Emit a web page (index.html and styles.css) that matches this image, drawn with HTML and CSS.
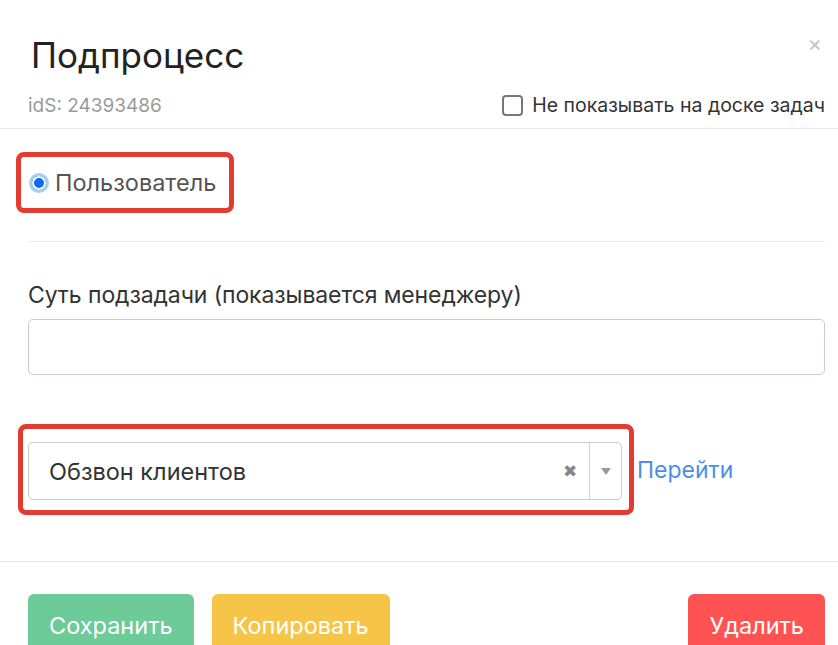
FILE: index.html
```
<!DOCTYPE html>
<html lang="ru">
<head>
    <meta charset="UTF-8">
    <meta name="viewport" content="width=device-width, initial-scale=1.0">
    <title>Подпроцесс</title>
    <link rel="stylesheet" href="styles.css">
</head>
<body>
    <div class="modal">
        <div class="modal-header">
            <div class="title-row">
                <h1>Подпроцесс</h1>
                <span class="close">&times;</span>
            </div>
            <div class="meta-row">
                <span class="ids">idS: 24393486</span>
                <label class="hide-check"><span class="checkbox"></span>Не показывать на доске задач</label>
            </div>
        </div>
        <div class="modal-body">
            <div class="mark mark-radio">
                <span class="radio"></span>
                <span class="radio-label">Пользователь</span>
            </div>
            <div class="divider"></div>
            <label class="field-label">Суть подзадачи (показывается менеджеру)</label>
            <div class="text-input"></div>
            <div class="select-row">
                <div class="mark mark-select">
                    <div class="select">
                        <span class="select-value">Обзвон клиентов</span>
                        <span class="select-clear">&#10006;</span>
                        <span class="select-arrow"><span class="caret"></span></span>
                    </div>
                </div>
                <a class="go-link" href="#">Перейти</a>
            </div>
        </div>
        <div class="modal-footer">
            <button class="btn btn-save">Сохранить</button>
            <button class="btn btn-copy">Копировать</button>
            <button class="btn btn-delete">Удалить</button>
        </div>
    </div>
</body>
</html>
```

FILE: styles.css
```
body {
    margin: 0;
    font-family: Inter, "Noto Sans", sans-serif;
    background: #fff;
    color: #333;
    overflow: hidden;
}
.modal-header {
    padding: 33px 13px 11px 28px;
    border-bottom: 1px solid #e6e6e6;
}
.title-row {
    display: flex;
    justify-content: space-between;
    align-items: flex-start;
}
h1 {
    margin: 0 0 16px 3px;
    font-size: 35px;
    line-height: 44px;
    font-weight: 400;
    color: #222;
}
.close {
    font-size: 22px;
    line-height: 20px;
    color: #c4c4c4;
    margin-right: 3px;
}
.meta-row {
    display: flex;
    justify-content: space-between;
    align-items: center;
    height: 24px;
}
.ids {
    font-size: 19px;
    color: #9a9a9a;
}
.hide-check {
    display: flex;
    align-items: center;
    font-size: 19.5px;
    color: #333;
}
.checkbox {
    width: 17px;
    height: 17px;
    border: 2px solid #777;
    border-radius: 4px;
    margin-right: 9px;
}
.modal-body {
    padding: 23px 13px 46px 28px;
}
.mark {
    border: 5px solid #e23b31;
    border-radius: 8px;
}
.mark-radio {
    display: inline-flex;
    align-items: center;
    margin-left: -12px;
    padding: 13px 13px 13px 8px;
    height: 25px;
}
.radio {
    width: 14px;
    height: 14px;
    border-radius: 50%;
    border: 3px solid #a9cdfb;
    background: #0b6cf2;
    box-shadow: inset 0 0 0 2px #fff;
    margin-right: 6px;
}
.radio-label {
    font-size: 23.5px;
    color: #555;
}
.divider {
    height: 1px;
    background: #ebebeb;
    margin: 28px 0 40px;
}
.field-label {
    display: block;
    font-size: 23px;
    line-height: 26px;
    color: #333;
    letter-spacing: -0.1px;
}
.text-input {
    margin-top: 11px;
    height: 54px;
    border: 1px solid #c9c9d1;
    border-radius: 5px;
}
.select-row {
    display: flex;
    align-items: center;
    margin-top: 49px;
}
.mark-select {
    margin-left: -10px;
    padding: 13px 7px 10px 5px;
}
.select {
    display: flex;
    align-items: center;
    width: 592px;
    height: 56px;
    border: 1px solid #c9c9d1;
    border-radius: 5px;
}
.select-value {
    flex: 1;
    padding-left: 20px;
    font-size: 23.5px;
    color: #333;
}
.select-clear {
    font-size: 17px;
    color: #888;
    margin-right: 12px;
}
.select-arrow {
    display: flex;
    align-items: center;
    justify-content: center;
    width: 31px;
    height: 100%;
    border-left: 1px solid #d0d0d0;
}
.caret {
    border-left: 5px solid transparent;
    border-right: 5px solid transparent;
    border-top: 7px solid #999;
}
.go-link {
    margin-left: 3px;
    font-size: 23px;
    color: #4a8ee8;
    text-decoration: none;
}
.modal-footer {
    display: flex;
    gap: 18px;
    padding: 32px 13px 0 28px;
    border-top: 1px solid #e6e6e6;
}
.btn {
    height: 62px;
    padding: 0 21px;
    border: none;
    border-radius: 6px;
    font-family: Inter, "Noto Sans", sans-serif;
    font-size: 23.5px;
    color: #fff;
    cursor: pointer;
}
.btn-save {
    background: #6ccb99;
}
.btn-copy {
    background: #f6c547;
}
.btn-delete {
    margin-left: auto;
    background: #ff5353;
}
```
